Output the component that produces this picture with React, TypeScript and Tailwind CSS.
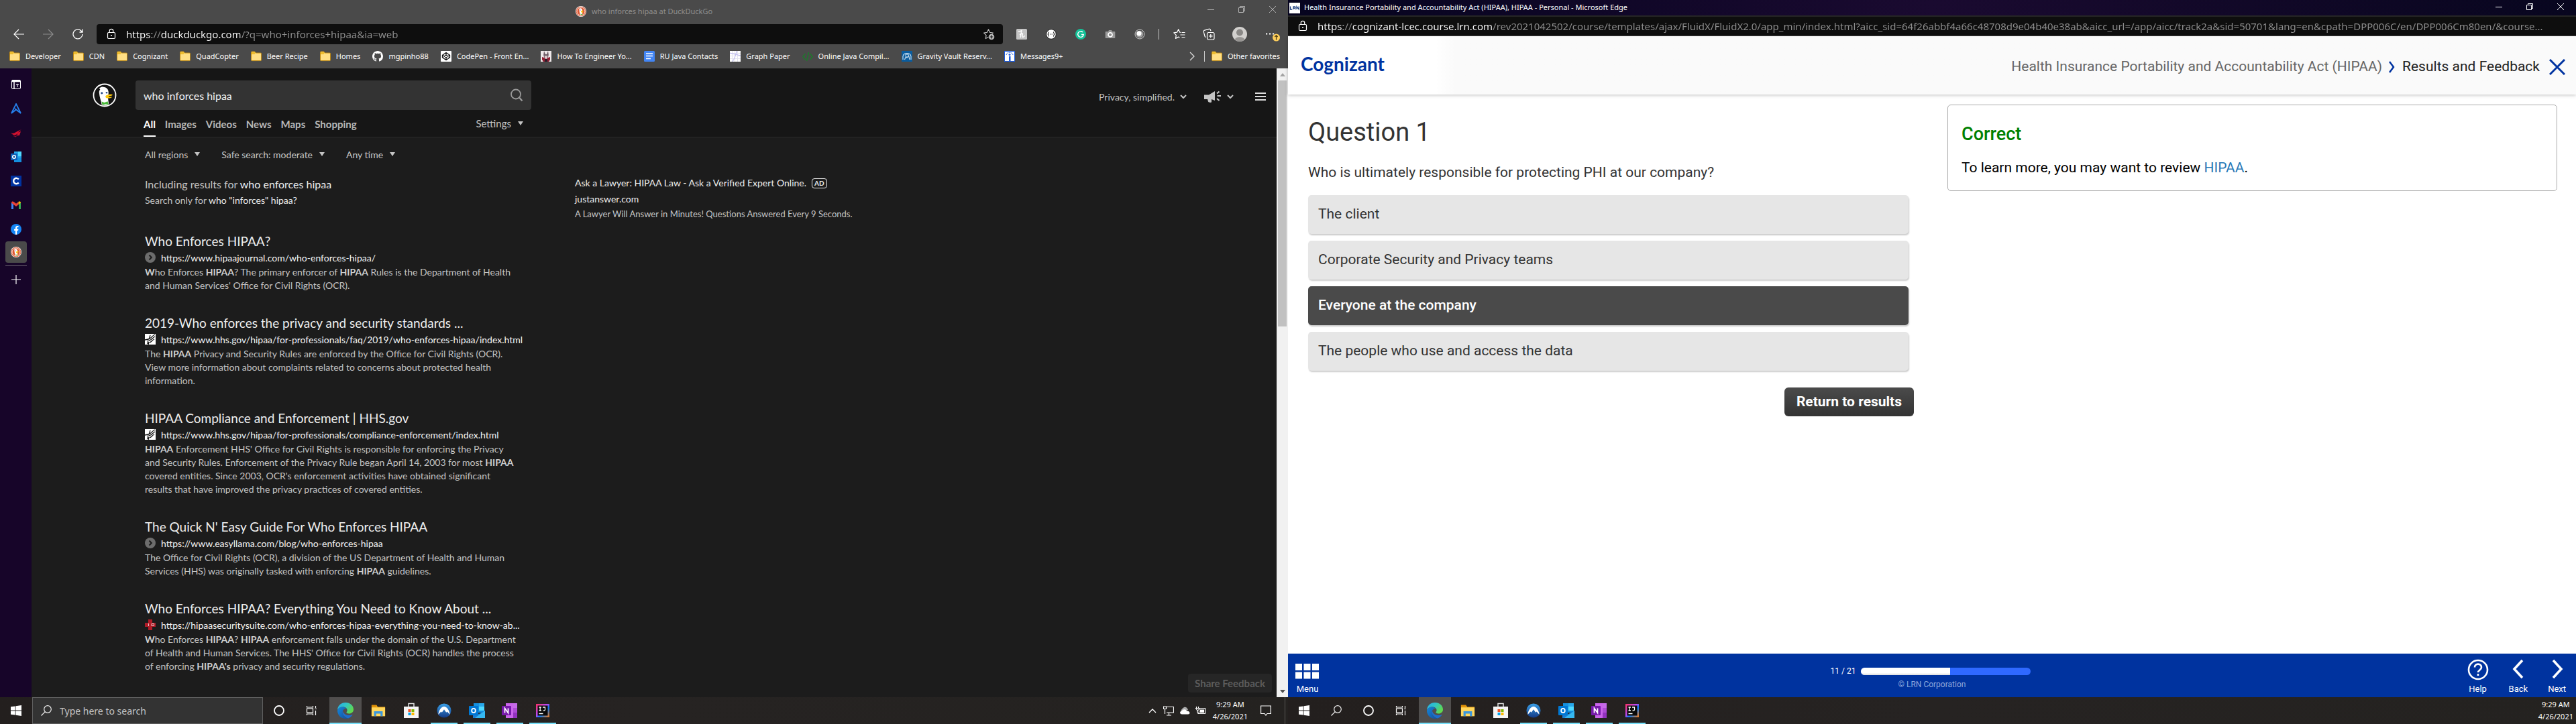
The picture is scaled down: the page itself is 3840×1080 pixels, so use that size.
import React from "react";
import type { ReactNode } from "react";

/* ---------- small shared glyphs ---------- */

type IconProps = { className?: string };

const Lock = () => (
  <svg viewBox="0 0 16 18" className="h-[18px] w-4 shrink-0" fill="none" stroke="#fff" strokeWidth="1.2">
    <rect x="2.5" y="6.5" width="11" height="9" rx="1.5" />
    <path d="M5.3 6.5V4a2.7 2.7 0 0 1 5.4 0v2.5" />
    <circle cx="8" cy="11" r="1" fill="#fff" stroke="none" />
  </svg>
);

const Minimize = () => (
  <svg viewBox="0 0 10 10" className="h-2.5 w-2.5" stroke="currentColor" fill="none"><path d="M0 5.5h10" /></svg>
);
const Restore = () => (
  <svg viewBox="0 0 10 10" className="h-2.5 w-2.5" stroke="currentColor" fill="none"><path d="M.5 2.5h7v7h-7zM2.5 2.5v-2h7v7h-2" /></svg>
);
const Close = () => (
  <svg viewBox="0 0 10 10" className="h-2.5 w-2.5" stroke="currentColor" fill="none"><path d="M0 0l10 10M10 0L0 10" /></svg>
);

const WindowControls = () => (
  <div className="flex h-full">
    {([["Minimize", <Minimize />], ["Restore", <Restore />], ["Close", <Close />]] as [string, ReactNode][]).map(([n, i]) => (
      <button key={n} aria-label={n} className="flex w-[46px] items-center justify-center">{i}</button>
    ))}
  </div>
);

const Folder = () => (
  <svg viewBox="0 0 16 16" className="h-4 w-4 shrink-0">
    <path d="M.5 2.2c0-.7.4-1.2 1.1-1.2h4.2l1.4 2h7.2c.7 0 1.1.4 1.1 1.1v9.4c0 .7-.4 1.1-1.1 1.1H1.6c-.7 0-1.1-.4-1.1-1.1z" fill="#ffdf85" stroke="#c08a12" />
    <path d="M1 1.5h4.8l1 1.5-1.3 2H1z" fill="#eebd2e" />
  </svg>
);

const DuckBadge = ({ className = "h-4 w-4" }: IconProps) => (
  <svg viewBox="0 0 16 16" className={className}>
    <circle cx="8" cy="8" r="8" fill="#fff" />
    <circle cx="8" cy="8" r="7.3" fill="#de5833" />
    <circle cx="8" cy="8" r="6" fill="none" stroke="#fff" strokeWidth=".8" />
    <path d="M5.3 4.2c1-1.7 4.4-1.2 4.7 1.5.2 2-.2 4.3.3 7.6l-3.3.5c-.5-3-1.7-6.2-1.7-9.6z" fill="#fff" />
    <path d="M8.4 7.3c1.3-.6 3.200-.6 3.400 0 .1.700-2.600.6-2.300 1.200.3.500 2.100 0 2 .6-.3.900-3.200.7-3.500-.3-.1-.6.100-1.200.4-1.500z" fill="#fdd20a" />
    <circle cx="7" cy="6" r=".6" fill="#2d4f8e" />
    <path d="M7.5 11.500l3 .8v1.200l-3-.6z" fill="#65bc46" />
  </svg>
);

const DuckLogo = () => (
  <svg viewBox="0 0 36 36" className="h-9 w-9">
    <circle cx="18" cy="18" r="16.5" fill="#151515" stroke="#fff" strokeWidth="1.8" />
    <path d="M10 8.500c1.200-3 4.300-3.600 6-2.800 3.600.2 7 2.300 7.600 6.600.4 3.300-.1 5.500-.4 9-.2 3.500.6 6 1 11-3.800 1.500-8 1.500-10.500.3-.8-5.500-3.500-12-3.900-18.300-.1-2.500.6-4 1.600-4.800z" fill="#fff" />
    <path d="M20 18.500c2.500-1.500 7-2 9.300-1.500 1.500.5-.8 2-4.800 2.600-1.200.2-.6 1.200.6 1.200 1.600 0 3.600-.7 3.700 0 .1 1.400-6.300 2.800-8.700.9-1.300-1-.9-2.500-.1-3.200z" fill="#fdc80a" />
    <circle cx="13.8" cy="14.8" r="1.6" fill="#2d4f8e" />
    <circle cx="21" cy="14.2" r="1.3" fill="#2d4f8e" />
    <path d="M13.500 27.500l4 1.600 5-1.800 1.500 5-5-.9-4.500 1.400z" fill="#4cba3c" />
  </svg>
);

const Caret = () => (
  <svg viewBox="0 0 8 6" className="h-1.5 w-2 shrink-0" fill="currentColor"><path d="M0 0h8L4 6z" /></svg>
);
const ChevronSmall = () => (
  <svg viewBox="0 0 10 7" className="h-[7px] w-2.5 shrink-0" fill="none" stroke="currentColor" strokeWidth="2"><path d="M1 1l4 4 4-4" /></svg>
);

/* ---------- browser toolbar (left window) ---------- */

const ExtensionHoney = () => (
  <svg viewBox="0 0 16 16" className="h-4 w-4">
    <rect width="16" height="16" rx="1.5" fill="#c4c4c4" />
    <path d="M3.500 4c1.500.6 3-.7 4.300-1.300L6.300 12.500M5.500 8.700c1.700-2.400 4.300-2.600 3.900-.4-.3 1.500-1 3.700.2 4 .9.200 2-.7 2.600-1.600" fill="none" stroke="#fff" strokeWidth="1.4" strokeLinecap="round" />
  </svg>
);
const ExtensionJson = () => (
  <svg viewBox="0 0 16 16" className="h-4 w-4">
    <circle cx="8" cy="8" r="7.3" fill="#fff" stroke="#1c1c1c" strokeWidth="1" />
    <path d="M5 4.800C3.500 5 4.600 7.400 3.200 8c1.400.6.300 3 1.800 3.200M11 4.800c1.500.2.400 2.600 1.800 3.200-1.400.6-.3 3-1.800 3.200M6 8h.8m.8 0h.8m.8 0h.8" fill="none" stroke="#222" strokeWidth="1.1" />
  </svg>
);
const ExtensionG = () => (
  <svg viewBox="0 0 16 16" className="h-4 w-4">
    <circle cx="8" cy="8" r="8" fill="#15c39a" />
    <path d="M11 5a4.300 4.300 0 1 0 1.300 3.500H9" fill="none" stroke="#fff" strokeWidth="1.4" />
  </svg>
);
const ExtensionCamera = () => (
  <svg viewBox="0 0 16 16" className="h-4 w-4">
    <path d="M1.500 4H5l1-2h4l1 2h3.500c.5 0 .8.300.8.800v8.400c0 .5-.3.800-.8.800h-13c-.5 0-.8-.3-.8-.8V4.800c0-.5.3-.8.800-.8z" fill="#9a9a9a" />
    <circle cx="8" cy="8.8" r="3" fill="#8a8a8a" stroke="#fff" strokeWidth="1.7" />
  </svg>
);
const ExtensionLens = () => (
  <svg viewBox="0 0 16 16" className="h-4 w-4">
    <circle cx="8" cy="8" r="7" fill="#555" stroke="#c8c8c8" strokeWidth="1" />
    <circle cx="8" cy="8" r="5.2" fill="#9a9a9a" />
    <circle cx="7" cy="6.8" r="3.6" fill="#fff" />
  </svg>
);
const StarList = () => (
  <svg viewBox="0 0 18 18" className="h-[18px] w-[18px]" fill="none" stroke="#fff" strokeWidth="1.2" strokeLinejoin="round">
    <path d="M11 6.500L9.700 6.200 7.700 1.700 5.600 6.200l-4.800.7 3.500 3.500-.8 5 4.200-2.300 1.800 1" />
    <path d="M12.500 6.500h5M10.500 10h7M12.500 13.500h5" />
  </svg>
);
const StarPlus = () => (
  <svg viewBox="0 0 18 18" className="h-[18px] w-[18px]" fill="none" stroke="#bbb" strokeWidth="1.2" strokeLinejoin="round">
    <path d="M8.500 13.200l-4.200 2.400.8-5L1.600 7.100l4.800-.7 2.100-4.600 2.100 4.600 4.800.7-1.300 1.200" />
    <circle cx="13" cy="13" r="4.3" fill="#bbb" stroke="none" />
    <path d="M13 10.600v4.800M10.600 13h4.800" stroke="#111" />
  </svg>
);
const Collections = () => (
  <svg viewBox="0 0 18 18" className="h-[18px] w-[18px]" fill="none" stroke="#fff" strokeWidth="1.2" strokeLinejoin="round">
    <rect x="6.5" y="6.5" width="10.5" height="10.5" rx="2" />
    <path d="M11.800 9v5.600M9 11.800h5.600M4.500 13.500c-.8-.2-1.300-.8-1.500-1.500L1.300 5.600c-.3-1.200.3-2.200 1.400-2.500L9 1.300c1.200-.3 2.200.3 2.500 1.400l.4 1.500" />
  </svg>
);
const Avatar = () => (
  <svg viewBox="0 0 22 22" className="h-[22px] w-[22px]">
    <circle cx="11" cy="11" r="11" fill="#d2d0ce" />
    <circle cx="11" cy="8.5" r="5" fill="#8a8886" />
    <path d="M4 19c.5-5 13.500-5 14 0-3.500 3.800-10.500 3.800-14 0z" fill="#979593" />
  </svg>
);

const toolbarItems: [string, ReactNode][] = [
  ["Honey", <ExtensionHoney />],
  ["JSON viewer", <ExtensionJson />],
  ["Grammar check", <ExtensionG />],
  ["Screenshot", <ExtensionCamera />],
  ["Lens", <ExtensionLens />],
];

const GitHub = () => (
  <svg viewBox="0 0 16 16" className="h-4 w-4 shrink-0" fill="#fff">
    <path d="M8 0C3.580 0 0 3.580 0 8c0 3.540 2.290 6.530 5.470 7.590.4.070.55-.17.55-.38 0-.19-.01-.82-.01-1.490-2.010.37-2.530-.49-2.690-.94-.09-.23-.48-.94-.82-1.130-.28-.15-.68-.52-.01-.53.63-.01 1.080.58 1.230.82.720 1.210 1.870.87 2.330.66.070-.52.280-.87.510-1.070-1.780-.2-3.640-.89-3.640-3.950 0-.87.310-1.590.82-2.150-.08-.2-.36-1.020.08-2.120 0 0 .67-.21 2.200.82.640-.18 1.320-.27 2-.27s1.360.09 2 .27c1.530-1.040 2.200-.82 2.200-.82.44 1.100.16 1.920.08 2.120.51.56.82 1.270.82 2.150 0 3.070-1.870 3.750-3.650 3.950.29.250.54.730.54 1.480 0 1.070-.01 1.930-.01 2.200 0 .21.150.46.550.38A8 8 0 0 0 16 8c0-4.420-3.580-8-8-8z" />
  </svg>
);
const CodePen = () => (
  <svg viewBox="0 0 16 16" className="h-4 w-4 shrink-0">
    <rect width="16" height="16" rx="1" fill="#fff" />
    <path d="M8 2.500l5.500 3.700v3.600L8 13.500 2.500 9.800V6.200zM8 2.500v3.700M8 9.800v3.700M2.500 6.200L8 9.800l5.500-3.600M2.500 9.800L8 6.200l5.500 3.600" fill="none" stroke="#111" strokeWidth="1.3" strokeLinejoin="round" />
  </svg>
);
const Rabbit = () => (
  <svg viewBox="0 0 16 16" className="h-4 w-4 shrink-0">
    <rect width="16" height="16" fill="#efe9ea" />
    <path d="M5 0l2 5h2l2-5 .8 6-1 4H5.200l-1-4z" fill="#6b5a63" />
    <path d="M2 9l3 1 3 2 3-2 3-1v4l-2 3H4l-2-3z" fill="#8f1f33" />
    <path d="M5.500 7h5l-.8 3h-3.400z" fill="#d6c5c8" />
    <path d="M6 12h4v4H6z" fill="#2b1d2a" />
  </svg>
);
const Docs = () => (
  <svg viewBox="0 0 16 16" className="h-4 w-4 shrink-0">
    <rect width="16" height="16" rx="1.5" fill="#4285f4" />
    <path d="M3 4h10M3 7.500h10M3 11.500h7" stroke="#fff" strokeWidth="1.6" />
  </svg>
);
const Graph = () => (
  <svg viewBox="0 0 16 16" className="h-4 w-4 shrink-0">
    <rect width="16" height="16" fill="#fff" />
    <path d="M0 3.500h16M0 7.500h16M0 11.500h16M3.500 0v16M7.500 0v16M11.500 0v16" stroke="#e3e3ef" />
    <path d="M10 0C9 6 7 11 4 16M0 3l16 4" stroke="#b9b6f0" fill="none" />
  </svg>
);
const CodeTag = () => (
  <svg viewBox="0 0 16 16" className="h-4 w-4 shrink-0" fill="none" stroke="#1d7a2b" strokeWidth="1.5">
    <path d="M4.500 4L1 8.500 4.500 13M11.500 4L15 8.500 11.500 13M9.500 2l-3 13" />
  </svg>
);
const Vault = () => (
  <svg viewBox="0 0 16 16" className="h-4 w-4 shrink-0">
    <rect width="16" height="16" fill="#0a5c9e" />
    <path d="M2 13V8c1-6 11-6 12 0v5M4.500 13l2-5 1.500 2 2.500-3 1.500 6M5 6.500c2-2 4-2 6 0" fill="none" stroke="#d9e9f5" strokeWidth="1.1" />
  </svg>
);
const MessageTower = () => (
  <svg viewBox="0 0 16 16" className="h-4 w-4 shrink-0">
    <rect width="16" height="16" fill="#1c5be0" />
    <path d="M1 1h14v14h-4V7H5v8H1z" fill="#fff" />
    <path d="M3 6c1-5 9-5 10 0" fill="none" stroke="#1c5be0" strokeWidth="1" strokeDasharray="2 1" />
    <rect x="5" y="6" width="6" height="9" fill="#fff" />
    <circle cx="8" cy="5.5" r="1.5" fill="#1c5be0" />
    <rect x="7" y="8" width="2.5" height="7" fill="#1c5be0" />
  </svg>
);

const bookmarks: [string, ReactNode][] = [
  ["Developer", <Folder />],
  ["CDN", <Folder />],
  ["Cognizant", <Folder />],
  ["QuadCopter", <Folder />],
  ["Beer Recipe", <Folder />],
  ["Homes", <Folder />],
  ["mgpinho88", <GitHub />],
  ["CodePen - Front En...", <CodePen />],
  ["How To Engineer Yo...", <Rabbit />],
  ["RU Java Contacts", <Docs />],
  ["Graph Paper", <Graph />],
  ["Online Java Compil...", <CodeTag />],
  ["Gravity Vault Reserv...", <Vault />],
  ["Messages9+", <MessageTower />],
];

const BrowserChrome = () => (
  <header className="h-[102px] bg-[#4a4a4a] font-['Noto_Sans',sans-serif] text-white">
    <div className="flex h-9 items-start text-[#8f8f8f]">
      <div className="w-[138px]" />
      <div className="flex h-[34px] flex-1 items-center justify-center gap-2 text-[11px]">
        <DuckBadge />
        <span>who inforces hipaa at DuckDuckGo</span>
      </div>
      <div className="h-7 text-[#b0b0b0]"><WindowControls /></div>
    </div>
    <div className="flex h-[30px] items-center">
      <nav className="flex w-36 items-center pl-1.5">
        <button aria-label="Back" className="flex w-11 justify-center">
          <svg viewBox="0 0 16 16" className="h-4 w-4" fill="none" stroke="#fff" strokeWidth="1.2"><path d="M16 8H1M8 1L1 8l7 7" /></svg>
        </button>
        <button aria-label="Forward" className="flex w-11 justify-center">
          <svg viewBox="0 0 16 16" className="h-4 w-4" fill="none" stroke="#8c8c8c" strokeWidth="1.2"><path d="M0 8h15M8 1l7 7-7 7" /></svg>
        </button>
        <button aria-label="Refresh" className="flex w-11 justify-center">
          <svg viewBox="0 0 16 16" className="h-4 w-4" fill="none" stroke="#fff" strokeWidth="1.3"><path d="M15 8A7 7 0 1 1 13 3l1.500 1.500M15 .5v4.500h-4.500" /></svg>
        </button>
      </nav>
      <div className="flex h-[30px] flex-1 items-center gap-3.5 rounded-[4px] bg-[#0e0e0e] pl-3.5 pr-3">
        <Lock />
        <input
          aria-label="Address"
          defaultValue="https://duckduckgo.com/?q=who+inforces+hipaa&ia=web"
          className="h-full min-w-0 flex-1 bg-[linear-gradient(90deg,#fff_0,#fff_38px,#8f8f8f_38px,#8f8f8f_52px,#fff_52px,#fff_170px,#8f8f8f_170px)] bg-clip-text text-[15px] text-transparent outline-none"
        />
        <button aria-label="Add to favorites"><StarPlus /></button>
      </div>
      <div className="flex items-center pl-1.5 pr-3">
        {toolbarItems.map(([n, i]) => (
          <button key={n} aria-label={n} className="flex w-11 justify-center">{i}</button>
        ))}
        <div className="ml-1.5 h-4 w-px bg-[#c8c8c8]" />
        <button aria-label="Favorites" className="ml-2 flex w-11 justify-center"><StarList /></button>
        <button aria-label="Collections" className="flex w-11 justify-center"><Collections /></button>
        <button aria-label="Profile" className="flex w-12 justify-center"><Avatar /></button>
        <button aria-label="Settings and more" className="ml-3.5 flex">
          <svg viewBox="0 0 22 22" className="h-[22px] w-[22px]">
            <path d="M1 10.500h2.200M6 10.500h2.200M11 10.500h2.200" stroke="#fff" strokeWidth="2" />
            <circle cx="16.5" cy="16" r="5.5" fill="#ffcf5c" />
            <path d="M16.500 19.500v-6.500M14.300 15l2.200-2.200 2.200 2.200" fill="none" stroke="#4a3a10" strokeWidth="1.2" />
          </svg>
        </button>
      </div>
    </div>
    <div className="flex h-9 items-center pl-3.5 pr-3 text-[11px]">
      <nav className="flex flex-1 items-center gap-[18px]">
        {bookmarks.map(([label, icon]) => (
          <a key={label} href="#" className="flex items-center gap-2 whitespace-nowrap">{icon}{label}</a>
        ))}
      </nav>
      <button aria-label="More favorites" className="mr-3.5">
        <svg viewBox="0 0 8 14" className="h-3.5 w-2" fill="none" stroke="#ddd" strokeWidth="1.3"><path d="M1 1l6 6-6 6" /></svg>
      </button>
      <div className="mr-2.5 h-4 w-px bg-[#c8c8c8]" />
      <a href="#" className="flex items-center gap-2 whitespace-nowrap"><Folder />Other favorites</a>
    </div>
  </header>
);

/* ---------- vertical tabs ---------- */

const tabs: [string, ReactNode][] = [
  ["Tab actions", (
    <svg viewBox="0 0 16 16" className="h-4 w-4" fill="none" stroke="#fff">
      <rect x="1.5" y="1.5" width="13" height="13" rx="1.5" /><path d="M1.500 3.500h13M5 4v10.500" strokeWidth="1.5" /><path d="M2 2.500h12" strokeWidth="2.5" /><path d="M10 12V7M8 9l2-2 2 2" />
    </svg>
  )],
  ["Arena", (
    <svg viewBox="0 0 16 16" className="h-4 w-4" fill="none" stroke="#2680eb" strokeWidth="1.8"><path d="M1 15L8 1l7 14-7-5.500zM6 8l5 3.500" /></svg>
  )],
  ["ROG", (
    <svg viewBox="0 0 16 16" className="h-4 w-4"><path d="M0 8.500c3 1 5 .5 8-1.500 3-2 5-3 8-3.500-2 1-4 2.500-5 4l4-1.500-2 6-5 .5c1-1 2-2 2.500-3.500C8.500 11 6.500 12 5 12L0 8.500zm3 4l3 1 3-.5-2 1.500z" fill="#d1122f" /></svg>
  )],
  ["Outlook", (
    <svg viewBox="0 0 16 16" className="h-4 w-4"><path d="M5 0h11v14H5z" fill="#28a8ea" /><path d="M11 0h5v7h-5z" fill="#50d9ff" /><path d="M5 9h11v7H5z" fill="#1490df" /><rect y="3" width="10" height="10" rx="1" fill="#0f5fb5" /><circle cx="5" cy="8" r="2.3" fill="none" stroke="#fff" strokeWidth="1.5" /></svg>
  )],
  ["Cognizant", (
    <svg viewBox="0 0 16 16" className="h-4 w-4"><path d="M0 0h16v16H0z" fill="#0033a0" /><path d="M11.800 5.500a4.200 4.200 0 1 0 0 5" fill="none" stroke="#fff" strokeWidth="2.4" /></svg>
  )],
  ["Gmail", (
    <svg viewBox="0 0 16 16" className="h-4 w-4"><path d="M1 4v10h3V6.500z" fill="#4285f4" /><path d="M15 4v10h-3V6.500z" fill="#34a853" /><path d="M1 4.500C1 2 3.500 2 4.500 3L8 5.800 11.500 3v4.200L8 10 4 7z" fill="#ea4335" /><path d="M11.500 3C13 2 15 2.500 15 4.500l-3.500 2.700z" fill="#fbbc04" /></svg>
  )],
  ["Facebook", (
    <svg viewBox="0 0 16 16" className="h-4 w-4"><circle cx="8" cy="8" r="8" fill="#1585f5" /><path d="M7 16V10H5V7.800h2V6c0-2 1.200-3 3-3l1.500.1V5h-1C9.400 5 9.200 5.500 9.200 6.200v1.600h2.300L11 10H9.200v6z" fill="#fff" /></svg>
  )],
];

const VerticalTabs = () => (
  <aside className="flex w-[47px] shrink-0 flex-col items-center bg-[#170529] pt-1.5">
    {tabs.map(([n, i]) => (
      <button key={n} aria-label={n} className="flex h-9 w-full items-center justify-center">{i}</button>
    ))}
    <button aria-label="who inforces hipaa at DuckDuckGo" className="flex h-8 w-8 items-center justify-center rounded-[4px] bg-[#4a4a4a]"><DuckBadge /></button>
    <div className="mt-1 h-px w-8 bg-[#6a6270]" />
    <button aria-label="New tab" className="mt-3">
      <svg viewBox="0 0 16 16" className="h-4 w-4" stroke="#fff" strokeWidth="1.2"><path d="M8 1v14M1 8h14" /></svg>
    </button>
  </aside>
);

/* ---------- search results ---------- */

const GenericFavicon = () => (
  <svg viewBox="0 0 16 16" className="h-4 w-4 shrink-0"><circle cx="8" cy="8" r="8" fill="#6d6d6d" /><path d="M6.500 4.500L9.800 8l-3.300 3.500" fill="none" stroke="#1c1c1c" strokeWidth="2" /></svg>
);
const HhsFavicon = () => (
  <svg viewBox="0 0 16 16" className="h-4 w-4 shrink-0"><path d="M0 0h16v16H0z" fill="#fff" /><path d="M15 1C10 3 10 7 5 8l-5 1M15 4c-4 2-4 5-9 6M14 8c-3 1-4 4-7 5M8 2L6 8M5 8l-1 7M6 12l-1 4" fill="none" stroke="#111" strokeWidth="1.3" /></svg>
);
const SuiteFavicon = () => (
  <svg viewBox="0 0 16 16" className="h-4 w-4 shrink-0"><path d="M5 0h6v5h5v6h-5v5H5v-5H0V5h5z" fill="#b01c28" /><path d="M5.500 6v4M10 6.500h3.500v3H10z" stroke="#e8c8ca" fill="none" /></svg>
);

type Result = { title: string; icon: ReactNode; url: string; lines: ReactNode[] };
const B = ({ children }: { children: ReactNode }) => <b className="font-bold text-[#cfcfcf]">{children}</b>;

const results: Result[] = [
  {
    title: "Who Enforces HIPAA?", icon: <GenericFavicon />, url: "https://www.hipaajournal.com/who-enforces-hipaa/",
    lines: [
      <><B>W</B>ho Enforces <B>HIPAA</B>? The primary enforcer of <B>HIPAA</B> Rules is the Department of Health</>,
      <>and Human Services' Office for Civil Rights (OCR).</>,
    ],
  },
  {
    title: "2019-Who enforces the privacy and security standards ...", icon: <HhsFavicon />, url: "https://www.hhs.gov/hipaa/for-professionals/faq/2019/who-enforces-hipaa/index.html",
    lines: [
      <>The <B>HIPAA</B> Privacy and Security Rules are enforced by the Office for Civil Rights (OCR).</>,
      <>View more information about complaints related to concerns about protected health</>,
      <>information.</>,
    ],
  },
  {
    title: "HIPAA Compliance and Enforcement | HHS.gov", icon: <HhsFavicon />, url: "https://www.hhs.gov/hipaa/for-professionals/compliance-enforcement/index.html",
    lines: [
      <><B>HIPAA</B> Enforcement HHS' Office for Civil Rights is responsible for enforcing the Privacy</>,
      <>and Security Rules. Enforcement of the Privacy Rule began April 14, 2003 for most <B>HIPAA</B></>,
      <>covered entities. Since 2003, OCR's enforcement activities have obtained significant</>,
      <>results that have improved the privacy practices of covered entities.</>,
    ],
  },
  {
    title: "The Quick N' Easy Guide For Who Enforces HIPAA", icon: <GenericFavicon />, url: "https://www.easyllama.com/blog/who-enforces-hipaa",
    lines: [
      <>The Office for Civil Rights (OCR), a division of the US Department of Health and Human</>,
      <>Services (HHS) was originally tasked with enforcing <B>HIPAA</B> guidelines.</>,
    ],
  },
  {
    title: "Who Enforces HIPAA? Everything You Need to Know About ...", icon: <SuiteFavicon />, url: "https://hipaasecuritysuite.com/who-enforces-hipaa-everything-you-need-to-know-ab...",
    lines: [
      <><B>W</B>ho Enforces <B>HIPAA</B>? <B>HIPAA</B> enforcement falls under the domain of the U.S. Department</>,
      <>of Health and Human Services. The HHS' Office for Civil Rights (OCR) handles the process</>,
      <>of enforcing <B>HIPAA's</B> privacy and security regulations.</>,
    ],
  },
];

const SearchPage = () => (
  <main className="flex min-w-0 flex-1 flex-col bg-[#1c1c1c] font-['Lato',sans-serif] text-[#c4c4c4]">
    <div className="flex justify-between border-b border-[#2b2b2b] bg-[#161616] pl-[91px] pr-4">
      <div className="flex gap-7 pt-[18px]">
        <a href="#" aria-label="DuckDuckGo" className="mt-1 h-9"><DuckLogo /></a>
        <div className="w-[590px]">
          <form className="flex h-11 items-center rounded-[4px] bg-[#333] px-3">
            <input aria-label="Search" defaultValue="who inforces hipaa" className="h-full flex-1 bg-transparent text-[16px] text-[#eee] outline-none" />
            <button type="button" aria-label="Search" className="text-[#999]">
              <svg viewBox="0 0 20 20" className="h-5 w-5" fill="none" stroke="currentColor" strokeWidth="1.8"><circle cx="9" cy="8.5" r="7" /><path d="M14 13.500l4.500 5" strokeWidth="2.4" /></svg>
            </button>
          </form>
          <div className="flex h-10 items-stretch justify-between px-3 text-[15px] leading-[42px]">
            <nav className="flex gap-3.5 font-bold text-[#b8b8b8]">
              <a href="#" className="border-b-2 border-white text-white">All</a>
              {["Images", "Videos", "News", "Maps", "Shopping"].map((t) => <a key={t} href="#">{t}</a>)}
            </nav>
            <button className="flex items-center gap-2.5 text-[#c4c4c4]">Settings<Caret /></button>
          </div>
        </div>
      </div>
      <div className="flex h-10 items-center self-start pt-[42px] text-[14px]">
        <button className="flex items-center gap-2">Privacy, simplified.<ChevronSmall /></button>
        <button aria-label="Announcements" className="ml-[26px] flex items-center gap-2">
          <svg viewBox="0 0 26 18" className="h-[18px] w-[26px]" fill="#c4c4c4">
            <path d="M0 6.500h7l9-5.500v14l-5-2v4.500c-1.500.8-4 .5-5-1L5 13H0z" /><path d="M19 4.500l3.500-3M19.500 8h5.500M19 12l3.500 3" stroke="#c4c4c4" strokeWidth="2.2" />
          </svg>
          <ChevronSmall />
        </button>
        <button aria-label="Menu" className="ml-8">
          <svg viewBox="0 0 16 14" className="h-3.5 w-4" stroke="#ddd" strokeWidth="2.2"><path d="M0 2h16M0 7h16M0 12h16" /></svg>
        </button>
      </div>
    </div>

    <div className="flex flex-1 flex-col pl-[169px]">
      <div className="flex h-[50px] items-center gap-8 text-[14px]">
        {["All regions", "Safe search: moderate", "Any time"].map((t) => (
          <button key={t} className="flex items-center gap-2.5">{t}<Caret /></button>
        ))}
      </div>
      <div className="flex flex-1 pt-2">
        <section className="w-[641px]">
          <p className="text-[16px] leading-6">Including results for <a href="#" className="text-[#eee]">who enforces hipaa</a></p>
          <p className="text-[14px] leading-6">Search only for <a href="#" className="text-[#eee]">who "inforces" hipaa?</a></p>
          <div className="mt-[37px] flex flex-col gap-[34px]">
            {results.map((r) => (
              <article key={r.title} className="whitespace-nowrap">
                <h2 className="text-[19px] leading-6 text-[#eee]"><a href="#">{r.title}</a></h2>
                <a href="#" className="flex h-6 items-center gap-2 text-[14px] text-[#f4f4f4]">{r.icon}{r.url}</a>
                <p className="text-[14px] leading-5">{r.lines.map((l, i) => <span key={i} className="block">{l}</span>)}</p>
              </article>
            ))}
          </div>
        </section>
        <aside>
          <h3 className="flex items-center gap-2 text-[14px] leading-5 text-[#eee]">
            <a href="#">Ask a Lawyer: HIPAA Law - Ask a Verified Expert Online.</a>
            <span className="flex h-[15px] items-center rounded-[4px] border border-[#eee] px-[3px] text-[10px] font-bold">AD</span>
          </h3>
          <a href="#" className="mt-1 block text-[14px] leading-5 text-[#eee]">justanswer.com</a>
          <p className="mt-0.5 text-[13px] leading-5">A Lawyer Will Answer in Minutes! Questions Answered Every 9 Seconds.</p>
        </aside>
      </div>
      <button className="mb-[7px] mr-[7px] h-7 self-end rounded-[4px] bg-[#262626] px-2.5 text-[15px] font-bold text-[#5c5c5c]">Share Feedback</button>
    </div>
  </main>
);

const Scrollbar = () => (
  <div className="flex w-[17px] shrink-0 flex-col items-center justify-between bg-[#f1f1f1] pb-1.5">
    <div className="flex w-full flex-col items-center">
      <div className="flex h-[18px] items-center"><svg viewBox="0 0 8 5" className="h-[5px] w-2" fill="#a3a3a3"><path d="M4 0l4 5H0z" /></svg></div>
      <div className="h-[367px] w-[13px] bg-[#c1c1c1]" />
    </div>
    <svg viewBox="0 0 8 5" className="h-[5px] w-2" fill="#505050"><path d="M0 0h8L4 5z" /></svg>
  </div>
);

/* ---------- taskbar ---------- */

const Windows = () => (
  <svg viewBox="0 0 16 16" className="h-4 w-4" fill="#fff"><path d="M0 2.300l6.700-.9v6.200H0zM7.500 1.300L16 .1v7.500H7.500zM0 8.400h6.700v6.200L0 13.700zM7.500 8.400H16v7.500l-8.500-1.200z" /></svg>
);
const Magnifier = () => (
  <svg viewBox="0 0 16 16" className="h-4 w-4 shrink-0" fill="none" stroke="#eee" strokeWidth="1.2"><circle cx="10" cy="6" r="5.3" /><path d="M6.300 9.700L.5 15.500" /></svg>
);
const Cortana = () => (
  <svg viewBox="0 0 16 16" className="h-4 w-4" fill="none" stroke="#fff" strokeWidth="1.8"><circle cx="8" cy="8" r="7" /></svg>
);
const TaskView = () => (
  <svg viewBox="0 0 16 16" className="h-4 w-4" fill="none" stroke="#fff" strokeWidth="1.2"><rect x="1.5" y="5" width="9" height="6" /><path d="M1.500 1v2h9V1M1.500 15v-2h9v2M14.500 1v3M14.500 8v7M13 5.500h3" /></svg>
);
const Edge = () => (
  <svg viewBox="0 0 24 24" className="h-6 w-6">
    <defs>
      <linearGradient id="edgeTop" x1="0" y1="0" x2="1" y2="0.5"><stop offset="0" stopColor="#2aa8e6" /><stop offset=".5" stopColor="#2fc5c8" /><stop offset="1" stopColor="#5fd94e" /></linearGradient>
      <linearGradient id="edgeLow" x1="0" y1="0" x2="1" y2="1"><stop offset="0" stopColor="#1687d8" /><stop offset="1" stopColor="#0f4fa3" /></linearGradient>
    </defs>
    <path d="M0 11C.5 4.500 5.500 0 12 0c7 0 12 4.800 12 10.200 0 3.900-3 6.300-6.600 6.300-2.800 0-4-1-4-1.900 0-.8 1.200-1.200 1.200-3.200C14.600 8.700 12 6.500 8.600 6.500 4.500 6.500 1.500 8.500 0 11z" fill="url(#edgeTop)" />
    <path d="M0 12c.5-3 4-5.500 7.500-5.500 2.500 0 4.500 1 5.700 2.500-3.200-.4-6 2.500-5.700 6.500.3 3.700 3.500 7.500 8.500 8.200-1.200.3-2.600.4-4 .3C5 24 0 18.500 0 12z" fill="url(#edgeLow)" />
    <path d="M8 11.500c-2.500 5 2 10.500 8 12 2.500-.9 4.700-2.400 6.300-4.700.4-.6-.2-.9-.7-.6-1.200.6-2.600.9-4.100.9C12 19.100 7.800 15.500 8 11.500z" fill="#1b6fcf" />
  </svg>
);
const Explorer = () => (
  <svg viewBox="0 0 24 24" className="h-[22px] w-[22px]"><path d="M1 3h8l2 3h12v15H1z" fill="#f0a81c" /><path d="M1 7h22v14H1z" fill="#ffd65c" /><path d="M5 13h14v8h-3.500v-4h-7v4H5z" fill="#3a96dd" /><path d="M1 3h8v3H1z" fill="#d98b06" /></svg>
);
const Store = () => (
  <svg viewBox="0 0 24 24" className="h-6 w-6"><path d="M8 6V1.500h8V6" fill="none" stroke="#ddd" strokeWidth="1.5" /><path d="M1 6h22v17H1z" fill="#f5f5f5" /><path d="M7.500 10h4v4h-4z" fill="#f25022" /><path d="M12.500 10h4v4h-4z" fill="#7fba00" /><path d="M7.500 15h4v4h-4z" fill="#00a4ef" /><path d="M12.500 15h4v4h-4z" fill="#ffb900" /></svg>
);
const Mountain = () => (
  <svg viewBox="0 0 24 24" className="h-[22px] w-[22px]">
    <defs><linearGradient id="mtn" x1="0" y1="0" x2="0" y2="1"><stop offset="0" stopColor="#3aa0e8" /><stop offset="1" stopColor="#123a86" /></linearGradient></defs>
    <circle cx="12" cy="12" r="11.5" fill="url(#mtn)" />
    <path d="M2.500 18.500C3.500 11 7.500 5.500 12 5.500s8.500 5.500 9.500 13L17 13.500l-1.500 1.500L12 10l-3.500 5L7 13.500z" fill="#fff" />
  </svg>
);
const Outlook = () => (
  <svg viewBox="0 0 24 24" className="h-6 w-6"><path d="M7 1h16v14H7z" fill="#1490df" /><path d="M15 1h8v6h-8z" fill="#28a8ea" /><path d="M15 6h8v6h-8z" fill="#50d9ff" /><path d="M6 13l9 4 9-5v11H6z" fill="#1a7cd0" /><path d="M24 12v11H9z" fill="#35b8f1" /><rect y="5" width="14" height="14" rx="1" fill="#0078d4" /><ellipse cx="7" cy="12" rx="2.8" ry="3.2" fill="none" stroke="#fff" strokeWidth="1.8" /></svg>
);
const OneNote = () => (
  <svg viewBox="0 0 24 24" className="h-6 w-6"><path d="M6 1h17v22H6z" fill="#ca64ea" /><path d="M17 1h6v7h-6z" fill="#c56be8" /><path d="M17 8h6v7h-6z" fill="#ae4bd5" /><path d="M17 15h6v8h-6z" fill="#9332bf" /><rect y="5" width="14" height="14" rx="1" fill="#7719aa" /><path d="M4.500 15.500v-7l5 7v-7" fill="none" stroke="#fff" strokeWidth="1.7" /></svg>
);
const IntelliJ = () => (
  <svg viewBox="0 0 20 20" className="h-5 w-5">
    <defs><linearGradient id="ij" x1="0" y1="0" x2="1" y2="1"><stop offset="0" stopColor="#fe315d" /><stop offset=".45" stopColor="#b74af7" /><stop offset=".6" stopColor="#087cfa" /><stop offset="1" stopColor="#f97a12" /></linearGradient></defs>
    <rect width="20" height="20" fill="url(#ij)" /><rect x="2.5" y="2.5" width="15" height="15" fill="#0a0a0a" />
    <path d="M4.500 5h3.500M6.200 5v5M4.500 10h3.500M10 5h3.500v3.500c0 1.500-1.500 1.900-3 1.300M4.500 14.500h6" fill="none" stroke="#fff" strokeWidth="1.3" />
  </svg>
);

const apps: { name: string; icon: ReactNode; state: "active" | "running" | "idle" }[] = [
  { name: "Microsoft Edge", icon: <Edge />, state: "active" },
  { name: "File Explorer", icon: <Explorer />, state: "idle" },
  { name: "Microsoft Store", icon: <Store />, state: "idle" },
  { name: "NordVPN", icon: <Mountain />, state: "running" },
  { name: "Outlook", icon: <Outlook />, state: "running" },
  { name: "OneNote", icon: <OneNote />, state: "running" },
  { name: "IntelliJ IDEA", icon: <IntelliJ />, state: "running" },
];

const TaskButton = ({ name, children }: { name: string; children: ReactNode }) => (
  <button aria-label={name} className="flex w-12 items-center justify-center">{children}</button>
);

const Clock = () => (
  <time className="text-center text-[11px] leading-[18px] text-white"><span className="block">9:29 AM</span><span className="block">4/26/2021</span></time>
);

const Taskbar = ({ primary }: { primary: boolean }) => (
  <footer className="flex h-10 shrink-0 bg-linear-to-r from-[#231f1e] via-[#262322] to-[#242220] font-['Noto_Sans',sans-serif]">
    <TaskButton name="Start"><Windows /></TaskButton>
    {primary ? (
      <label className="flex w-[344px] items-center gap-3 border border-[#606060] bg-[#333] pl-3">
        <Magnifier />
        <input placeholder="Type here to search" aria-label="Type here to search" className="w-full bg-transparent text-[14px] text-white placeholder-[#c4c4c4] outline-none" />
      </label>
    ) : (
      <TaskButton name="Search"><Magnifier /></TaskButton>
    )}
    <TaskButton name="Cortana"><Cortana /></TaskButton>
    <TaskButton name="Task View"><TaskView /></TaskButton>
    <div className="flex gap-px pl-[3px]">
      {apps.map((a) => (
        <button key={a.name} aria-label={a.name} className={a.state === "active" ? "flex w-12 flex-col items-center bg-[#504e4d]" : "flex w-12 flex-col items-center"}>
          <span className="flex h-[38px] items-center pt-0.5">{a.icon}</span>
          {a.state === "active" && <span className="h-0.5 w-full bg-[#76e0fa]" />}
          {a.state === "running" && <span className="h-0.5 w-10 bg-[#76e0fa]" />}
        </button>
      ))}
    </div>
    <div className="flex flex-1 items-center justify-end">
      {primary ? (
        <>
          <div className="flex items-center gap-2 pr-2.5">
            <svg viewBox="0 0 16 16" className="h-4 w-4" fill="none" stroke="#fff" strokeWidth="1.3"><path d="M3 11l5-5 5 5" /></svg>
            <svg viewBox="0 0 16 16" className="h-4 w-4" fill="none" stroke="#fff" strokeWidth="1.2"><path d="M5 2.500h10.500v8.500H5M8.500 11v4M5 15h7M.5 2h4v3.500h-4zM2.500 5.500V13" /></svg>
            <svg viewBox="0 0 16 16" className="h-4 w-4"><path d="M2 10c0-3 2-5 5-7 3-1 5 1 6 4z" fill="#aaa" /><path d="M4 13.500c-3.500 0-4-4.500-.5-4.700C5 5.500 10 5.500 11 8.500c5-.5 6 5 2 5z" fill="#fff" /></svg>
            <svg viewBox="0 0 16 16" className="h-4 w-4" fill="none" stroke="#fff" strokeWidth="1.2"><path d="M6 4.500h8.500v8H4v-3" /><path d="M7 6.500h6v4.500H6z" fill="#fff" stroke="none" /><path d="M1.500 2v2.500M4.500 2v2.500M.5 4.500h5v2L3 8zM3 8v3" /></svg>
          </div>
          <Clock />
          <button aria-label="Notifications" className="ml-[19px] mr-5">
            <svg viewBox="0 0 16 16" className="h-4 w-4" fill="none" stroke="#fff" strokeWidth="1.2"><path d="M.6 1h14.800v11.500H10L8 15l-2-2.500H.6z" /></svg>
          </button>
          <div className="mr-1 h-full w-px bg-[#5a5856]" />
        </>
      ) : (
        <div className="pr-1"><Clock /></div>
      )}
    </div>
  </footer>
);

/* ---------- course window (right) ---------- */

const CourseChrome = () => (
  <header className="font-['Noto_Sans',sans-serif] text-white">
    <div className="flex h-[23px] items-center justify-between bg-linear-to-r from-[#06041f] via-[#1a0a30] to-[#08061f]">
      <div className="flex items-center gap-1.5 pl-0.5 text-[11px]">
        <svg viewBox="0 0 16 16" className="h-4 w-4"><path d="M0 0h16v16H0z" fill="#fff" /><path d="M1.500 5.500v4.500h2.800M6 10V6h2c1.500 0 1.500 2.200 0 2.200H6M8 8.200L9.300 10M11 10V5.800l3.200 4V5.500" fill="none" stroke="#1d3f80" strokeWidth="1.3" /></svg>
        Health Insurance Portability and Accountability Act (HIPAA), HIPAA - Personal - Microsoft Edge
      </div>
      <div className="h-5 self-start"><WindowControls /></div>
    </div>
    <div className="flex h-[31px] items-center gap-3.5 border-y-2 border-[#262626] bg-[#0e0e0e] pl-3.5 pr-4">
      <Lock />
      <input
        aria-label="Address"
        readOnly
        defaultValue="https://cognizant-lcec.course.lrn.com/rev2021042502/course/templates/ajax/FluidX/FluidX2.0/app_min/index.html?aicc_sid=64f26abbf4a66c48708d9e04b40e38ab&aicc_url=/app/aicc/track2a&sid=50701&lang=en&cpath=DPP006C/en/DPP006Cm80en/&course..."
        className="h-full min-w-0 flex-1 bg-[linear-gradient(90deg,#fff_0,#fff_38px,#8f8f8f_38px,#8f8f8f_52px,#fff_52px,#fff_260px,#8f8f8f_260px)] bg-clip-text text-[15px] text-transparent outline-none"
      />
    </div>
  </header>
);

const answers = ["The client", "Corporate Security and Privacy teams", "Everyone at the company", "The people who use and access the data"];

const CourseBody = () => (
  <main className="flex flex-1 flex-col bg-white font-['Roboto',sans-serif] text-[#333]">
    <div className="flex h-[87px] items-center justify-between bg-linear-to-r from-white from-[220px] to-[#fafafa] to-[250px] pl-[19px] pr-4 shadow-[0_1px_5px_rgba(0,0,0,0.25)]">
      <span className="pb-1.5 font-['Lato',sans-serif] text-[28px] font-bold leading-8 text-[#0033a0]">Cognizant</span>
      <nav className="flex items-center gap-2.5 pt-1 text-[21px]">
        <a href="#" className="text-[#666]">Health Insurance Portability and Accountability Act (HIPAA)</a>
        <svg viewBox="0 0 10 18" className="h-[18px] w-2.5" fill="none" stroke="#0033a0" strokeWidth="2.5"><path d="M1 1l6 8-6 8" /></svg>
        <span className="text-[#222]">Results and Feedback</span>
        <button aria-label="Close course" className="ml-1">
          <svg viewBox="0 0 24 24" className="h-6 w-6" stroke="#0033a0" strokeWidth="3"><path d="M1 1l22 22M23 1L1 23" /></svg>
        </button>
      </nav>
    </div>
    <div className="grid flex-1 grid-cols-2">
      <section className="pl-[30px] pr-[27px] pt-8">
        <h1 className="text-[38px] leading-[48px]">Question 1</h1>
        <p className="mt-6 text-[21px] leading-6">Who is ultimately responsible for protecting PHI at our company?</p>
        <div className="mt-[22px] mr-2 flex flex-col gap-2.5">
          {answers.map((a, i) => (
            <button
              key={a}
              className={
                i === 2
                  ? "h-[58px] rounded-[5px] bg-[#4a4a4a] px-[15px] text-left text-[21px] font-medium text-white shadow-[1px_2px_2px_rgba(0,0,0,0.22)]"
                  : "h-[58px] rounded-[5px] bg-[#e6e6e6] px-[15px] text-left text-[21px] shadow-[1px_2px_2px_rgba(0,0,0,0.2)]"
              }
            >
              {a}
            </button>
          ))}
        </div>
        <div className="mt-[25px] flex justify-end">
          <button className="h-[43px] rounded-[6px] bg-linear-to-b from-[#4b4b4b] to-[#333] px-[18px] text-[21px] font-bold text-white">Return to results</button>
        </div>
      </section>
      <section className="pl-[23px] pr-7 pt-[15px]">
        <div className="h-[129px] rounded-[5px] border border-[#aaa] px-5 pt-[27px]">
          <h2 className="text-[27px] font-medium leading-8 text-[#008000]">Correct</h2>
          <p className="mt-[22px] text-[21px] leading-6 text-black">To learn more, you may want to review <a href="#" className="text-[#2a7ab8]">HIPAA</a>.</p>
        </div>
      </section>
    </div>
    <div className="grid h-[65px] grid-cols-[1fr_auto_1fr] bg-[#00339f] text-[13px] leading-4 text-white">
      <div className="flex pl-[11px] pt-[15px]">
        <button className="flex flex-col items-center justify-between pb-1">
          <svg viewBox="0 0 36 24" className="h-6 w-9" fill="#fff"><path d="M0 0h10v10H0zM12.500 0h10v10h-10zM25 0h10v10H25zM0 12.500h10v10H0zM12.500 12.500h10v10h-10zM25 12.500h10v10H25z" /></svg>
          Menu
        </button>
      </div>
      <div className="flex flex-col items-center pt-[18px]">
        <div className="mr-1 flex items-center gap-2 text-[12px]">
          <span>11 / 21</span>
          <div role="progressbar" aria-label="Course progress" aria-valuenow={11} aria-valuemax={21} className="h-[11px] w-[253px] overflow-hidden rounded-full bg-[#2f69ff]">
            <div className="h-full bg-linear-to-b from-white from-70% to-[#ddd]" style={{ width: `${(11 / 21) * 100}%` }} />
          </div>
        </div>
        <p className="mt-1 text-[12px] text-[#8fa8dc]">© LRN Corporation</p>
      </div>
      <div className="flex justify-end gap-[30px] pb-1 pr-[15px] pt-2">
        <button className="flex flex-col items-center justify-between">
          <svg viewBox="0 0 32 32" className="h-8 w-8" fill="none" stroke="#fff" strokeWidth="2.6"><circle cx="16" cy="16" r="14" /><path d="M11 12.500c0-6.500 10-6.500 10 0 0 3.800-5 4-5 7.500" /><path d="M16 22v3" /></svg>
          Help
        </button>
        <button className="flex flex-col items-center justify-between">
          <svg viewBox="0 0 20 32" className="h-8 w-5" fill="none" stroke="#fff" strokeWidth="3.6"><path d="M16 2L4 15l12 13" /></svg>
          Back
        </button>
        <button className="flex flex-col items-center justify-between">
          <svg viewBox="0 0 20 32" className="h-8 w-5" fill="none" stroke="#fff" strokeWidth="3.6"><path d="M4 2l12 13L4 28" /></svg>
          Next
        </button>
      </div>
    </div>
  </main>
);

export default function App() {
  return (
    <div className="grid min-h-screen grid-cols-2 bg-black">
      <div className="flex min-w-0 flex-col">
        <BrowserChrome />
        <div className="flex flex-1">
          <VerticalTabs />
          <SearchPage />
          <Scrollbar />
        </div>
        <Taskbar primary />
      </div>
      <div className="flex min-w-0 flex-col">
        <CourseChrome />
        <CourseBody />
        <Taskbar primary={false} />
      </div>
    </div>
  );
}
